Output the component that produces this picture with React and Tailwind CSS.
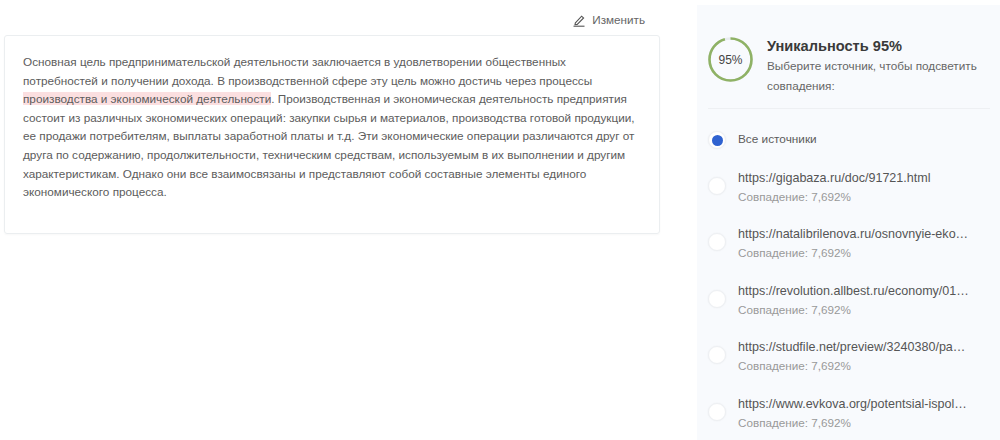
import React from 'react';

const sources = [
  'https://gigabaza.ru/doc/91721.html',
  'https://natalibrilenova.ru/osnovnyie-eko…',
  'https://revolution.allbest.ru/economy/01…',
  'https://studfile.net/preview/3240380/pa…',
  'https://www.evkova.org/potentsial-ispol…',
];

const Ring = () => (
  <div className="relative w-[45px] h-[45px] shrink-0">
    <svg width="45" height="45" viewBox="0 0 45 45" className="-rotate-90">
      <circle cx="22.5" cy="22.5" r="21" fill="none" stroke="#e8ecef" strokeWidth="2.6" />
      <circle cx="22.5" cy="22.5" r="21" fill="none" stroke="#8fb265" strokeWidth="2.6" strokeDasharray="125.4 132" />
    </svg>
    <div className="absolute inset-0 flex items-center justify-center text-[12px] text-[#444]">95%</div>
  </div>
);

const Radio = ({checked}) => (
  <span className="w-[18px] h-[18px] shrink-0 rounded-full bg-white border border-[#eef0f3] shadow-[0_0_2px_rgba(0,0,0,0.06)] flex items-center justify-center">
    {checked && <span className="w-[11px] h-[11px] rounded-full bg-[#2f62d0]"></span>}
  </span>
);

export default function App() {
  return (
    <div className="w-[1000px] h-[440px] overflow-hidden bg-white flex font-['Liberation_Sans',Arial,sans-serif]">
      <div className="w-[660px] ml-[4px] shrink-0">
        <div className="h-[35px] flex items-end justify-end pr-[19px] pb-[8px] gap-[7px] text-[11.7px] leading-[14px] text-[#666]">
          <svg width="12" height="12" viewBox="0 0 12 12" fill="none" stroke="#555" strokeWidth="1.1">
            <path d="M2.4 7.8 L8.6 1.2 L10.6 3 L4.2 9.4 L2 9.6 Z" />
            <path d="M0.5 11.2 H11.5" />
          </svg>
          <span>Изменить</span>
        </div>
        <div className="h-[199px] w-[656px] border border-[#ebeef0] rounded-[3px] pt-[17px] pl-[18px] pr-[14px] text-[11.76px] leading-[18.6px] text-[#5c5c5c] shadow-[0_1px_2px_rgba(0,0,0,0.03)]">
          <p className="whitespace-nowrap">
            Основная цель предпринимательской деятельности заключается в удовлетворении общественных<br />
            потребностей и получении дохода. В производственной сфере эту цель можно достичь через процессы<br />
            <span className="bg-[#fbdfe0]">производства и экономической деятельности</span>. Производственная и экономическая деятельность предприятия<br />
            состоит из различных экономических операций: закупки сырья и материалов, производства готовой продукции,<br />
            ее продажи потребителям, выплаты заработной платы и т.д. Эти экономические операции различаются друг от<br />
            друга по содержанию, продолжительности, техническим средствам, используемым в их выполнении и другим<br />
            характеристикам. Однако они все взаимосвязаны и представляют собой составные элементы единого<br />
            экономического процесса.
          </p>
        </div>
      </div>
      <div className="ml-[33px] mt-[5px] w-[303px] bg-[#f8fafd] pl-[11px] pr-[10px] pt-[32px]">
        <div className="flex gap-[14px] pb-[12px] border-b border-[#eef0f3]">
          <Ring />
          <div>
            <div className="text-[14.6px] font-bold text-[#3a3a3a] leading-[18px]">Уникальность 95%</div>
            <div className="text-[11.75px] leading-[20px] text-[#666] mt-[1px]">Выберите источник, чтобы подсветить совпадения:</div>
          </div>
        </div>
        <div className="mt-[21px] flex items-center gap-[12px] text-[11.8px] text-[#5c5c5c] h-[20px]">
          <Radio checked />
          <span>Все источники</span>
        </div>
        {sources.map((url, i) => (
          <div key={i} className="mt-[18.5px] h-[38px] flex items-start gap-[12px]">
            <span className="mt-[8px]"><Radio /></span>
            <div className="min-w-0 w-[240px]">
              <div className="whitespace-nowrap text-[12.55px] leading-[19px] text-[#555]">{url}</div>
              <div className="text-[11.7px] leading-[18px] text-[#999]">Совпадение: 7,692%</div>
            </div>
          </div>
        ))}
      </div>
    </div>
  );
}
